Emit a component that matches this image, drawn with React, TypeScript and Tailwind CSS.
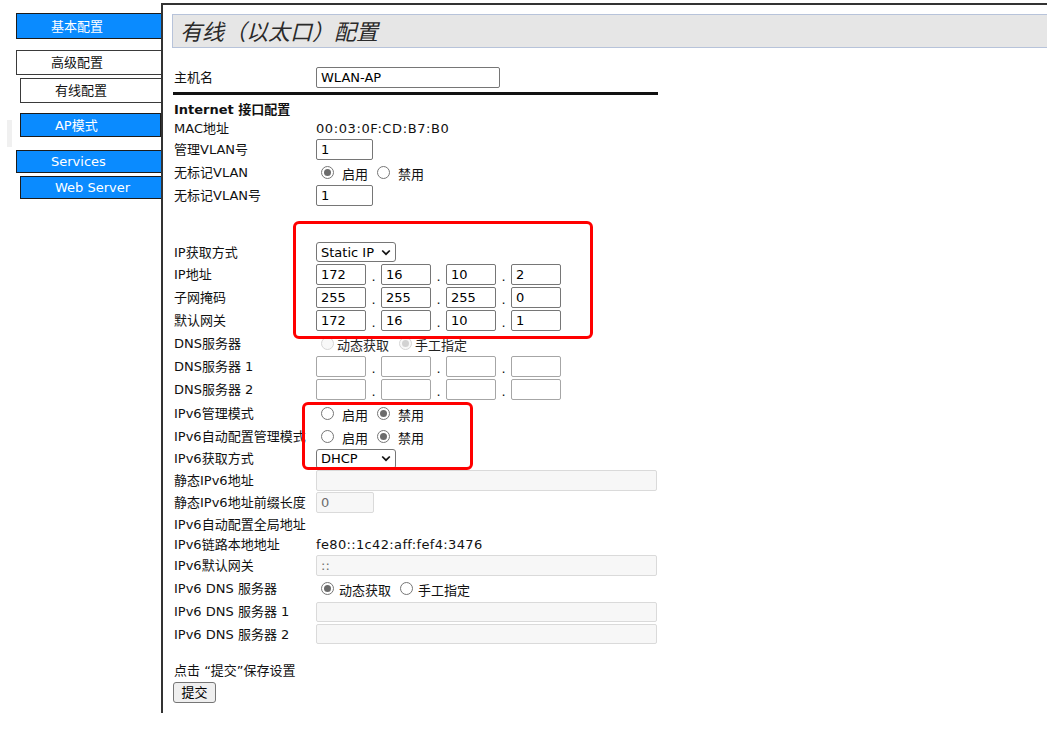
import React from 'react';

type Variant = 'active' | 'empty' | 'disabled';

const Radio = ({ checked = false, disabled = false }: { checked?: boolean; disabled?: boolean }) => (
  <span
    className={`flex h-[13px] w-[13px] shrink-0 items-center justify-center rounded-full border ${
      disabled ? 'border-[#d6d6d6] bg-[#f8f8f8]' : 'border-[#767676] bg-white'
    }`}
  >
    {checked && <span className={`h-[7px] w-[7px] rounded-full ${disabled ? 'bg-[#d2d2d2]' : 'bg-[#6b6b6b]'}`} />}
  </span>
);

const Field = ({ value = '', w, h = 'h-[21px]', variant = 'active' }: { value?: string; w: string; h?: string; variant?: Variant }) => {
  const look =
    variant === 'disabled'
      ? 'border-[#dadada] bg-[#f7f7f7] text-[#6d6d6d]'
      : variant === 'empty'
      ? 'border-[#a6a6a6] bg-white text-black'
      : 'border-[#767676] bg-white text-black';
  return <div className={`flex items-center rounded-[2px] border pl-[4px] ${w} ${h} ${look}`}>{value}</div>;
};

const Select = ({ value }: { value: string }) => (
  <div className="flex h-[20px] w-[80px] items-center justify-between rounded-[3px] border border-[#767676] bg-white pl-[4px] pr-[4px] text-black">
    <span>{value}</span>
    <svg width="10" height="7" viewBox="0 0 10 7">
      <path d="M1.2 1.5 5 5.2 8.8 1.5" stroke="#111" strokeWidth="1.7" fill="none" />
    </svg>
  </div>
);

const IpGroup = ({ parts, variant = 'active' }: { parts: string[]; variant?: Variant }) => (
  <div className="flex items-center">
    {parts.map((p, i) => (
      <React.Fragment key={i}>
        {i > 0 && <span className="flex w-[15px] justify-center pt-[4px]">.</span>}
        <Field value={p} w="w-[50px]" variant={variant} />
      </React.Fragment>
    ))}
  </div>
);

const Row = ({ label, h, bold = false, children }: { label: string; h: string; bold?: boolean; children?: React.ReactNode }) => (
  <div className={`flex items-center ${h}`}>
    <div className={`w-[143px] shrink-0 whitespace-nowrap pl-px ${bold ? 'font-bold' : ''}`}>{label}</div>
    <div className="flex items-center whitespace-nowrap">{children}</div>
  </div>
);

const EnableDisable = ({ enabled }: { enabled: boolean }) => (
  <div className="flex items-center pl-[5px]">
    <Radio checked={enabled} />
    <span className="ml-[8px] pt-[4px]">启用</span>
    <span className="ml-[9px]">
      <Radio checked={!enabled} />
    </span>
    <span className="ml-[8px] pt-[4px]">禁用</span>
  </div>
);

const NavButton = ({ label, blue, cls }: { label: string; blue: boolean; cls: string }) => (
  <div
    className={`flex items-center border pl-[34px] ${cls} ${
      blue ? 'border-[#1c1c1c] bg-[#0a8bff] text-white' : 'border-[#3a3a3a] bg-white text-[#111]'
    }`}
  >
    {label}
  </div>
);

export default function App() {
  return (
    <div className="relative flex h-[738px] w-[1047px] overflow-hidden bg-white text-[13px] leading-none text-[#111] font-[family-name:'DejaVu_Sans','Noto_Sans_CJK_SC',sans-serif]">
      {/* left menu frame */}
      <div className="flex w-[161px] shrink-0 flex-col">
        <NavButton label="基本配置" blue cls="ml-[16px] mt-[13px] h-[26px] w-[146px]" />
        <NavButton label="高级配置" blue={false} cls="ml-[16px] mt-[11px] h-[25px] w-[146px]" />
        <NavButton label="有线配置" blue={false} cls="ml-[20px] mt-[3px] h-[25px] w-[142px]" />
        <div className="mt-[10px] flex items-start">
          <div className="ml-[7px] mt-[7px] h-[27px] w-[5px] bg-[#f0f0f0]" />
          <NavButton label="AP模式" blue cls="ml-[8px] h-[24px] w-[142px]" />
        </div>
        <NavButton label="Services" blue cls="ml-[16px] mt-[3px] h-[23px] w-[146px]" />
        <NavButton label="Web Server" blue cls="ml-[20px] mt-[3px] h-[23px] w-[142px]" />
      </div>

      {/* right content frame */}
      <div className="relative mt-[3px] h-[710px] flex-1 border-l-2 border-t-2 border-[#333]">
        <div className="ml-[9px] mt-[9px] flex h-[34px] items-center border-y border-l border-[#b7c3da] bg-[#e6e6e6] pl-[7px] pt-[3px] text-[22px] italic text-[#2a2a2a]">
          有线（以太口）配置
        </div>

        <div className="ml-[10px] w-[485px]">
          <div className="mt-[17px]">
            <Row label="主机名" h="h-[24px]">
              <Field value="WLAN-AP" w="w-[184px]" />
            </Row>
          </div>
          <div className="mt-[3px] h-[3px] bg-[#111]" />
          <div className="mt-[4px]">
            <Row label="Internet 接口配置" h="h-[20px]" bold />
          </div>
          <Row label="MAC地址" h="h-[19px]">
            <span className="tracking-[0.6px]">00:03:0F:CD:B7:B0</span>
          </Row>
          <Row label="管理VLAN号" h="h-[22px]">
            <Field value="1" w="w-[57px]" />
          </Row>
          <Row label="无标记VLAN" h="h-[24px]">
            <EnableDisable enabled />
          </Row>
          <Row label="无标记VLAN号" h="h-[22px]">
            <Field value="1" w="w-[57px]" />
          </Row>
          <div className="h-[35px]" />
          <Row label="IP获取方式" h="h-[22px]">
            <Select value="Static IP" />
          </Row>
          <Row label="IP地址" h="h-[23px]">
            <IpGroup parts={['172', '16', '10', '2']} />
          </Row>
          <Row label="子网掩码" h="h-[23px]">
            <IpGroup parts={['255', '255', '255', '0']} />
          </Row>
          <Row label="默认网关" h="h-[23px]">
            <IpGroup parts={['172', '16', '10', '1']} />
          </Row>
          <Row label="DNS服务器" h="h-[23px]">
            <div className="flex items-center pl-[5px] text-[#222]">
              <Radio disabled />
              <span className="ml-[3px] pt-[4px]">动态获取</span>
              <span className="ml-[10px]">
                <Radio checked disabled />
              </span>
              <span className="ml-[3px] pt-[4px]">手工指定</span>
            </div>
          </Row>
          <Row label="DNS服务器 1" h="h-[23px]">
            <IpGroup parts={['', '', '', '']} variant="empty" />
          </Row>
          <Row label="DNS服务器 2" h="h-[23px]">
            <IpGroup parts={['', '', '', '']} variant="empty" />
          </Row>
          <Row label="IPv6管理模式" h="h-[24px]">
            <EnableDisable enabled={false} />
          </Row>
          <Row label="IPv6自动配置管理模式" h="h-[23px]">
            <EnableDisable enabled={false} />
          </Row>
          <Row label="IPv6获取方式" h="h-[21px]">
            <Select value="DHCP" />
          </Row>
          <Row label="静态IPv6地址" h="h-[22px]">
            <Field w="w-[341px]" variant="disabled" />
          </Row>
          <Row label="静态IPv6地址前缀长度" h="h-[23px]">
            <Field value="0" w="w-[58px]" variant="disabled" />
          </Row>
          <Row label="IPv6自动配置全局地址" h="h-[20px]" />
          <Row label="IPv6链路本地地址" h="h-[20px]">
            <span className="tracking-[0.35px]">fe80::1c42:aff:fef4:3476</span>
          </Row>
          <Row label="IPv6默认网关" h="h-[23px]">
            <Field value="::" w="w-[341px]" variant="disabled" />
          </Row>
          <Row label="IPv6 DNS 服务器" h="h-[23px]">
            <div className="flex items-center pl-[5px]">
              <Radio checked />
              <span className="ml-[5px] pt-[4px]">动态获取</span>
              <span className="ml-[9px]">
                <Radio />
              </span>
              <span className="ml-[5px] pt-[4px]">手工指定</span>
            </div>
          </Row>
          <Row label="IPv6 DNS 服务器 1" h="h-[23px]">
            <Field w="w-[341px]" h="h-[20px]" variant="disabled" />
          </Row>
          <Row label="IPv6 DNS 服务器 2" h="h-[22px]">
            <Field w="w-[341px]" h="h-[20px]" variant="disabled" />
          </Row>
          <div className="h-[15px]" />
          <div className="flex h-[21px] items-center pl-px">点击 “提交”保存设置</div>
          <button className="mt-[1px] flex h-[21px] w-[43px] items-center justify-center rounded-[3px] border border-[#767676] bg-[#efefef] text-[13px] text-black">
            提交
          </button>
        </div>

        {/* highlight boxes drawn over the form */}
        <div className="pointer-events-none absolute left-[130px] top-[216px] h-[118px] w-[300px] rounded-[6px] border-[3px] border-[#f00]" />
        <div className="pointer-events-none absolute left-[139px] top-[397px] h-[68px] w-[171px] rounded-[6px] border-[3px] border-[#f00]" />
      </div>
    </div>
  );
}
